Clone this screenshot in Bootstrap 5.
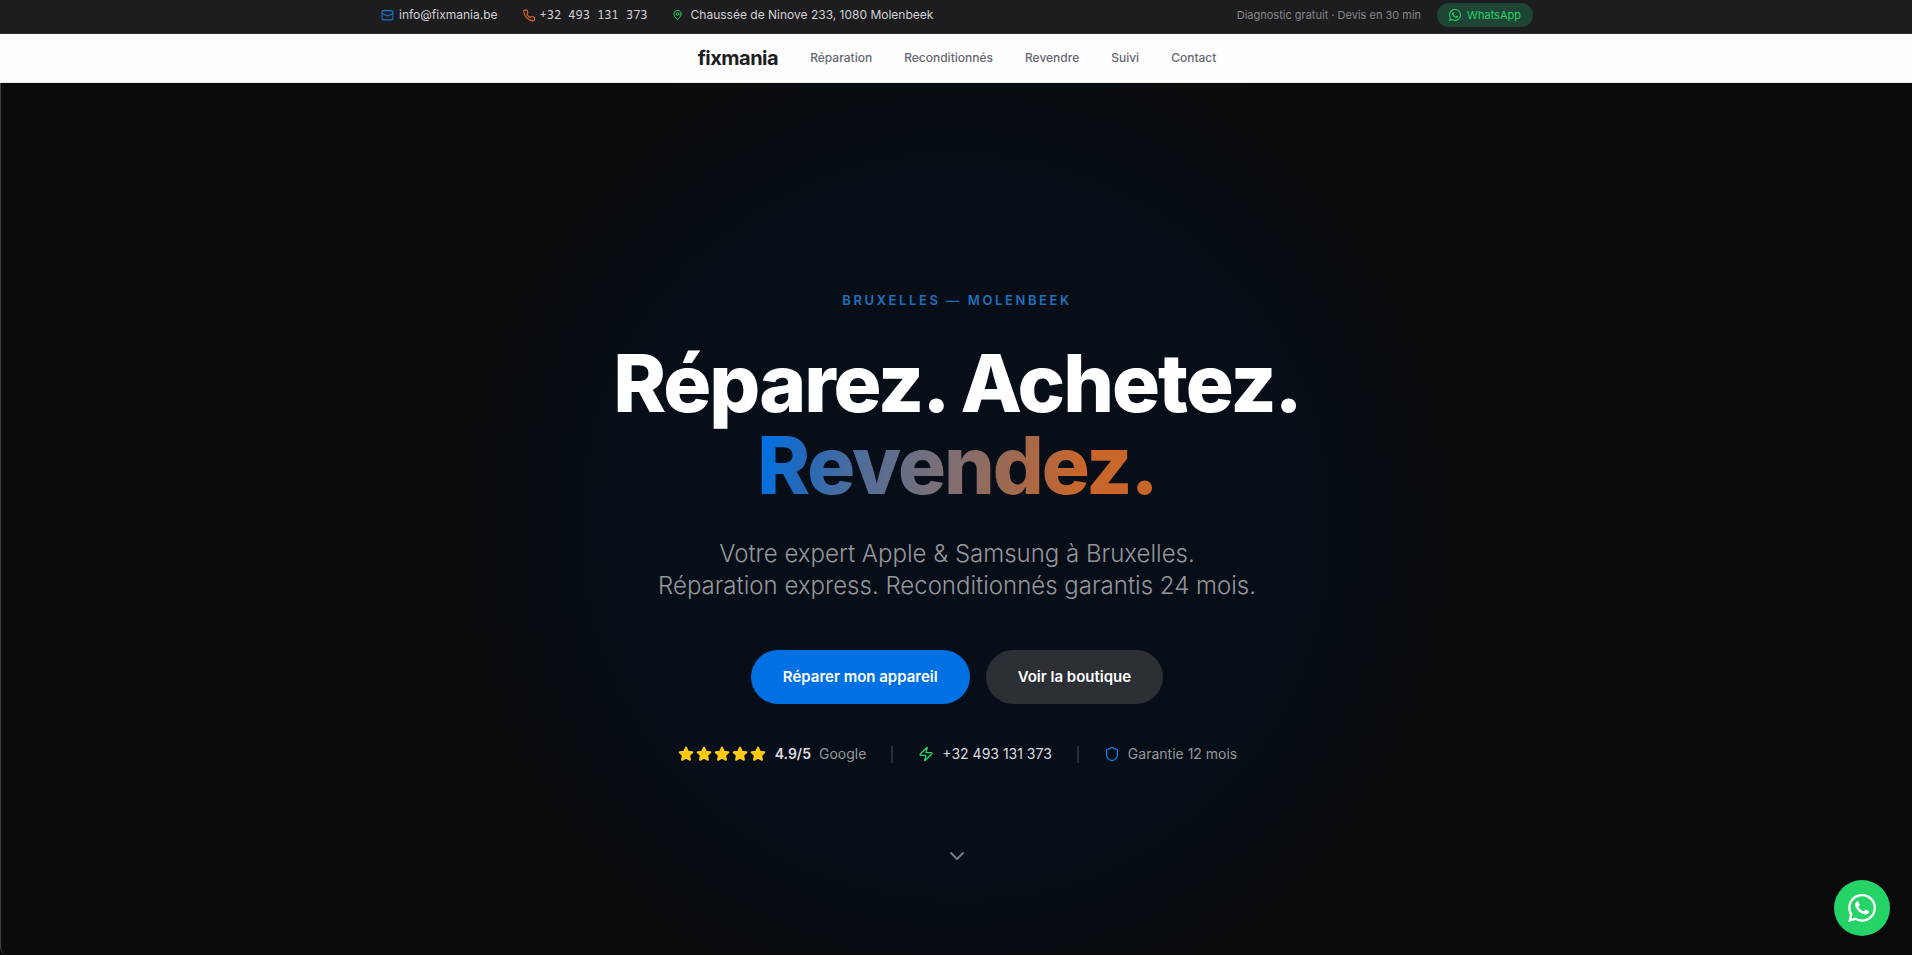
<!DOCTYPE html>
<html lang="fr">
<head>
<meta charset="utf-8">
<meta name="viewport" content="width=device-width, initial-scale=1">
<title>fixmania — Réparation Apple &amp; Samsung à Bruxelles</title>
<link href="https://cdn.jsdelivr.net/npm/bootstrap@5.3.0/dist/css/bootstrap.min.css" rel="stylesheet">
<style>
  body { font-family: Inter, "Liberation Sans", sans-serif; background: #0a0a0a; }
  a { text-decoration: none; }
  svg { flex: none; }
  .ico { fill: none; stroke: currentColor; stroke-width: 2; stroke-linecap: round; stroke-linejoin: round; }
  .c-blue { color: #1a78d8; }
  .c-orange { color: #e0692f; }
  .c-green { color: #25d366; }
  .topbar, .mainnav { padding-left: 2px; }
  .topbar { background: #1d1d1f; border-bottom: 1px solid #2c2c2f; font-size: 12px; line-height: 16px; height: 34px; }
  .topbar-inner { max-width: 1152px; height: 30px; }
  .topbar a { color: #d1d1d6; }
  .topbar .mono { font-family: "Noto Sans Mono", "DejaVu Sans Mono", monospace; }
  .note { font-size: 11px; color: #86868b; }
  .topbar .wa-pill { color: #25d366; background: #1e4536; font-size: 11px; font-weight: 400; padding: 4px 12px; gap: 6px; }
  .mainnav { background: #fdfdfd; height: 49px; gap: 32px; border-bottom: 1px solid #e8e8ea; }
  .mainnav .nav-link { font-size: 12px; line-height: 16px; font-weight: 500; color: #666770; padding: 0; }
  .brand { font-size: 20px; line-height: 28px; font-weight: 700; color: #1d1d1f; letter-spacing: -0.5px; }
  .hero { min-height: calc(100vh - 83px); padding: 207px 24px 0 25px;
    border-left: 1px solid #3c4249; border-bottom-left-radius: 8px;
    background: radial-gradient(circle 540px at 50% 51%, #070e18 0%, #070e17 65%, #0a0a0a 100%) #0a0a0a; }
  .eyebrow { font-size: 13px; line-height: 20px; font-weight: 600; letter-spacing: 2.6px; color: #2270bd; margin-bottom: 32px; }
  .hero h1 { font-size: 80px; line-height: 82px; font-weight: 800; letter-spacing: -2px; color: #fff; margin-bottom: 32px; }
  .hero h1 span { display: block; width: fit-content; margin: 0 auto; }
  .hero h1 .grad { background: linear-gradient(100deg, #0071e3 2%, #2469b9 13%, #4c6d9c 25%, #7a7078 46%, #a0694f 64%, #c8662c 80%); -webkit-background-clip: text; background-clip: text; color: transparent; }
  .tagline { font-size: 24px; line-height: 32px; font-weight: 300; color: #96969c; margin-bottom: 48px; }
  .cta { font-size: 15px; line-height: 22px; font-weight: 600; color: #fff; padding: 16px 32px; border: 0; border-radius: 27px; }
  .cta:hover { color: #fff; }
  .cta-main { background: #0071e3; }
  .cta-alt { background: #2c3035; }
  .proof { font-size: 14px; line-height: 20px; color: #96969c; margin-top: 40px; gap: 25px; }
  .proof a, .proof strong { color: #dcdce0; }
  .proof strong { font-weight: 600; }
  .rule { width: 2px; height: 17px; background: #2c2e33; }
  .scroll-cue { color: #7c7d82; margin-top: 80px; }
  .wa-float { width: 56px; height: 56px; right: 22px; bottom: 19px; background: #25d366; color: #fff; }
</style>
</head>
<body>
<svg class="d-none">
  <symbol id="star" viewBox="0 0 24 24"><path fill="#fcc916" stroke="#fcc916" stroke-width="3" stroke-linejoin="round" d="M12 2.500l2.900 6 6.600 1-4.800 4.600 1.200 6.600-5.900-3.100-5.900 3.100 1.200-6.600-4.800-4.600 6.600-1z"/></symbol>
  <symbol id="whatsapp" viewBox="0 0 24 24"><path fill="currentColor" d="M17.472 14.382c-.297-.149-1.758-.867-2.030-.967-.273-.099-.471-.148-.670.150-.197.297-.767.966-.940 1.164-.173.199-.347.223-.644.075-.297-.150-1.255-.463-2.390-1.475-.883-.788-1.480-1.761-1.653-2.059-.173-.297-.018-.458.130-.606.134-.133.298-.347.446-.520.149-.174.198-.298.298-.497.099-.198.050-.371-.025-.520-.075-.149-.669-1.612-.916-2.207-.242-.579-.487-.500-.669-.510-.173-.008-.371-.010-.570-.010-.198 0-.520.074-.792.372-.272.297-1.040 1.016-1.040 2.479 0 1.462 1.065 2.875 1.213 3.074.149.198 2.096 3.200 5.077 4.487.709.306 1.262.489 1.694.625.712.227 1.360.195 1.871.118.571-.085 1.758-.719 2.006-1.413.248-.694.248-1.289.173-1.413-.074-.124-.272-.198-.570-.347m-5.421 7.403h-.004a9.870 9.870 0 01-5.031-1.378l-.361-.214-3.741.982.998-3.648-.235-.374a9.860 9.860 0 01-1.510-5.260c.001-5.450 4.436-9.884 9.888-9.884 2.640 0 5.122 1.030 6.988 2.898a9.825 9.825 0 012.893 6.994c-.003 5.450-4.437 9.884-9.885 9.884m8.413-18.297A11.815 11.815 0 0012.050 0C5.495 0 .160 5.335.157 11.892c0 2.096.547 4.142 1.588 5.945L.057 24l6.305-1.654a11.882 11.882 0 005.683 1.448h.005c6.554 0 11.890-5.335 11.893-11.893a11.821 11.821 0 00-3.480-8.413z"/></symbol>
</svg>

<div class="topbar">
  <div class="topbar-inner container-fluid p-0 d-flex align-items-center justify-content-between">
    <div class="d-flex align-items-center gap-4">
      <a class="d-flex align-items-center" href="mailto:info@fixmania.be">
        <svg class="ico c-blue me-1" width="14" height="12" viewBox="0 0 24 22"><rect x="1" y="3" width="20" height="17" rx="3"/><path d="M1 8l10 5 10-5"/></svg>info@fixmania.be</a>
      <a class="d-flex align-items-center mono" href="tel:+32493131373">
        <svg class="ico c-orange me-1" width="14" height="13" viewBox="0 0 24 24"><path d="M22 16.920v3a2 2 0 0 1-2.180 2 19.800 19.800 0 0 1-8.630-3.070 19.500 19.500 0 0 1-6-6 19.800 19.800 0 0 1-3.070-8.670A2 2 0 0 1 4.110 2h3a2 2 0 0 1 2 1.720c.130.960.360 1.900.700 2.810a2 2 0 0 1-.450 2.110L8.090 9.910a16 16 0 0 0 6 6l1.270-1.270a2 2 0 0 1 2.110-.450c.910.340 1.850.570 2.810.700A2 2 0 0 1 22 16.920z"/></svg>+32 493 131 373</a>
      <a class="d-flex align-items-center" href="#adresse">
        <svg class="ico c-green me-2" width="11" height="12" viewBox="0 0 24 24"><path d="M20 10c0 6-8 12-8 12s-8-6-8-12a8 8 0 0 1 16 0z"/><circle cx="12" cy="10" r="3"/></svg>Chaussée de Ninove 233, 1080 Molenbeek</a>
    </div>
    <div class="d-flex align-items-center gap-3">
      <span class="note">Diagnostic gratuit · Devis en 30 min</span>
      <a class="wa-pill rounded-pill d-flex align-items-center" href="#whatsapp"><svg width="12" height="12"><use href="#whatsapp"/></svg>WhatsApp</a>
    </div>
  </div>
</div>

<nav class="mainnav d-flex align-items-center justify-content-center">
  <a class="brand" href="#">fixmania</a>
  <a class="nav-link" href="#reparation">Réparation</a>
  <a class="nav-link" href="#reconditionnes">Reconditionnés</a>
  <a class="nav-link" href="#revendre">Revendre</a>
  <a class="nav-link" href="#suivi">Suivi</a>
  <a class="nav-link" href="#contact">Contact</a>
</nav>

<main class="hero d-flex flex-column align-items-center text-center">
  <p class="eyebrow">BRUXELLES — MOLENBEEK</p>
  <h1><span>Réparez. Achetez.</span><span class="grad">Revendez.</span></h1>
  <p class="tagline">Votre expert Apple &amp; Samsung à Bruxelles.<br>Réparation express. Reconditionnés garantis 24 mois.</p>
  <div class="d-flex flex-wrap justify-content-center gap-3">
    <button type="button" class="btn cta cta-main">Réparer mon appareil</button>
    <button type="button" class="btn cta cta-alt">Voir la boutique</button>
  </div>
  <div class="proof d-flex flex-wrap align-items-center justify-content-center">
    <div class="d-flex align-items-center gap-2">
      <span class="d-flex"><svg width="18" height="16"><use href="#star"/></svg><svg width="18" height="16"><use href="#star"/></svg><svg width="18" height="16"><use href="#star"/></svg><svg width="18" height="16"><use href="#star"/></svg><svg width="18" height="16"><use href="#star"/></svg></span>
      <strong>4.9/5</strong><span>Google</span>
    </div>
    <span class="rule"></span>
    <a class="d-flex align-items-center gap-2" href="tel:+32493131373"><svg class="ico c-green" width="16" height="16" viewBox="0 0 24 24"><path d="M4 14a1 1 0 0 1-.780-1.630l9.900-10.200a.5.5 0 0 1 .860.460l-1.920 6.020A1 1 0 0 0 13 10h7a1 1 0 0 1 .780 1.630l-9.900 10.200a.5.5 0 0 1-.860-.460l1.920-6.020A1 1 0 0 0 11 14z"/></svg>+32 493 131 373</a>
    <span class="rule"></span>
    <div class="d-flex align-items-center gap-2"><svg class="ico c-blue" width="16" height="16" viewBox="0 0 24 24"><path d="M20 13c0 5-3.500 7.500-7.660 8.950a1 1 0 0 1-.670-.010C7.500 20.500 4 18 4 13V6a1 1 0 0 1 1-1c2 0 4.500-1.200 6.240-2.720a1.170 1.170 0 0 1 1.520 0C14.510 3.810 17 5 19 5a1 1 0 0 1 1 1z"/></svg>Garantie 12 mois</div>
  </div>
  <a class="scroll-cue" href="#suite" aria-label="Défiler"><svg class="ico d-block" width="24" height="24" viewBox="0 0 24 24"><path d="M6 9l6 6 6-6"/></svg></a>
</main>

<a class="wa-float position-fixed rounded-circle d-flex align-items-center justify-content-center" href="#whatsapp" aria-label="WhatsApp"><svg width="28" height="28"><use href="#whatsapp"/></svg></a>
<script src="https://cdn.jsdelivr.net/npm/bootstrap@5.3.0/dist/js/bootstrap.bundle.min.js"></script>
</body>
</html>
